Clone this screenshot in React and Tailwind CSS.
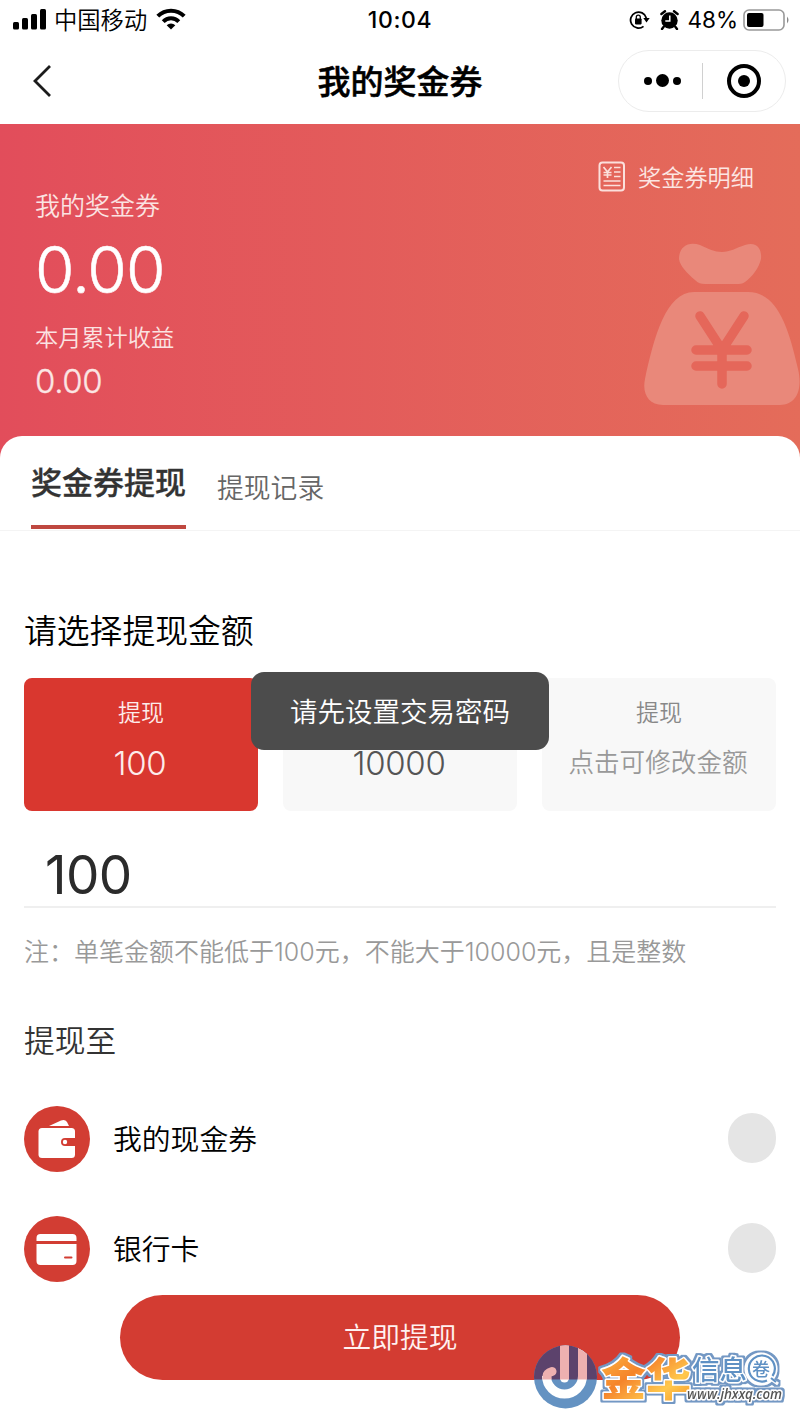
import React from 'react';

const amounts = [
    { value: '100', label: '提现', active: true },
    { value: '10000' },
    { value: '点击可修改金额', label: '提现', custom: true },
];

const StatusBar = () => (
    <div className="flex h-10 items-center justify-between pl-[13px] pr-[10px] text-black">
        <div className="flex flex-1 items-center">
            <svg width="34" height="21" viewBox="0 0 34 21">
                <rect x="0" y="13" width="6" height="7.500" rx="1.500" />
                <rect x="9" y="9" width="6" height="11.500" rx="1.500" />
                <rect x="18" y="5" width="6" height="15.500" rx="1.500" />
                <rect x="27" y="0" width="6" height="20.500" rx="1.500" />
            </svg>
            <span className="ml-[7px] pt-[2px] text-[23.3px] font-[350] leading-none">中国移动</span>
            <svg className="ml-[9px] -translate-y-px" width="30" height="22" viewBox="0 0 30 22">
                <path d="M1.800 8.200a18.500 18.500 0 0 1 26.400 0" fill="none" stroke="#000" strokeWidth="4" />
                <path d="M7.200 13.600a11 11 0 0 1 15.600 0" fill="none" stroke="#000" strokeWidth="4" />
                <path d="M15 21.500l-4.300-4.200a6.200 6.200 0 0 1 8.600 0z" />
            </svg>
        </div>
        <span className="mr-[3px] pt-px text-[23px] font-medium leading-none tracking-[0.6px]">10:04</span>
        <div className="flex flex-1 items-center justify-end">
            <svg width="21" height="20" viewBox="0 0 21 20">
                <path d="M14.500 16.400A8 8 0 1 1 17.300 8" fill="none" stroke="#000" strokeWidth="1.800" />
                <path d="M14.300 8h6.400l-3.200 4.500z" />
                <rect x="6" y="8.500" width="6.600" height="5.900" rx=".8" />
                <path d="M7.300 9.500V7.200a2 2 0 0 1 4 0v2.300" fill="none" stroke="#000" strokeWidth="1.300" />
            </svg>
            <svg className="ml-[10px]" width="19" height="20" viewBox="0 0 19 20">
                <circle cx="9.500" cy="10.500" r="8.200" />
                <path d="M1.400 4l3.600-2.800M17.600 4L14 1.200M3.500 17l-1.500 2M15.500 17l1.500 2" stroke="#000" strokeWidth="2.400" strokeLinecap="round" />
                <path d="M9.800 5.500V11H5.300" fill="none" stroke="#fff" strokeWidth="1.500" />
            </svg>
            <span className="ml-[8px] text-[22.500px] leading-none">48%</span>
            <svg className="ml-[5px]" width="47" height="22" viewBox="0 0 47 22">
                <rect x="1" y="1" width="40" height="20" rx="5" fill="none" stroke="#999" strokeWidth="1.600" />
                <rect x="4" y="4" width="16.500" height="14" rx="2" />
                <path d="M44 7.500q3 3.500 0 7z" fill="#888" />
            </svg>
        </div>
    </div>
);

const NavBar = () => (
    <header className="flex h-[84px] items-center justify-between px-[14px] pb-[3px]">
        <div className="flex-1">
            <svg className="ml-[18px]" width="20" height="34" viewBox="0 0 20 34" fill="none" stroke="#1c1c1c" strokeWidth="2.800">
                <path d="M18 2L3 17l15 15" />
            </svg>
        </div>
        <h1 className="pt-[3px] text-[33px] font-medium leading-none text-black [-webkit-text-stroke:0.5px_#000]">我的奖金券</h1>
        <div className="flex flex-1 justify-end">
            <div className="flex h-[62px] w-[168px] items-center rounded-full border border-[#ececec]">
                <div className="flex w-[83px] items-center justify-center gap-[4px] pl-1">
                    <span className="h-2 w-2 rounded-full bg-black" />
                    <span className="h-[13px] w-[13px] rounded-full bg-black" />
                    <span className="h-2 w-2 rounded-full bg-black" />
                </div>
                <span className="h-9 w-px bg-[#d0d0d0]" />
                <div className="flex flex-1 justify-center">
                    <div className="flex h-[34px] w-[34px] items-center justify-center rounded-full border-4 border-black">
                        <span className="h-3 w-3 rounded-full bg-black" />
                    </div>
                </div>
            </div>
        </div>
    </header>
);

const MoneyBag = () => (
    <svg width="156" height="164" viewBox="0 0 156 164">
        <path fill="#e9887a" d="M35 17C35 4 45-1 56 3C65 7 70 10 78 10S92 6 101 3C113-1 118 7 117 17C115 26 108 35 101 40C98 42 96 42 92 42H61C57 42 54 41 51 38C43 31 36 24 35 17Z" />
        <path fill="#e9887a" d="M50 50H104C132 50 144 82 154 127C159 148 152 163 136 163H19C4 163-2 151 1 137C10 95 22 50 50 50Z" />
        <path fill="none" stroke="#e5675a" strokeWidth="9.500" strokeLinecap="round" strokeLinejoin="round" d="M56 74L78 108L100 74M78 108V142M52 108H103M52 124H103" />
    </svg>
);

const Banner = () => (
    <section className="flex h-[342px] justify-between bg-linear-to-r from-[#e24d5b] to-[#e46c5a] pl-[35px] text-white">
        <div className="flex flex-col items-start pt-[64px]">
            <p className="text-[25px] leading-9 font-[350] text-[#fbe3e2]">我的奖金券</p>
            <p className="mt-[6px] text-[64px] leading-[80px] font-[350] tracking-[-1px] [-webkit-text-stroke:0.5px_#fff]">0.00</p>
            <p className="mt-[10px] text-[23.200px] leading-9 font-[350] text-[#fbe3e2]">本月累计收益</p>
            <p className="mt-[5px] text-[33px] leading-10 font-[350] tracking-[-0.400px] text-[#fbe6e4] [-webkit-text-stroke:0.3px_#fbe6e4]">0.00</p>
        </div>
        <div className="flex flex-col items-end pt-9">
            <div className="flex items-center pr-[46px]">
                <svg className="-translate-y-[2px]" width="28" height="31" viewBox="0 0 28 31" fill="none" stroke="#fbe0dc" strokeWidth="2">
                    <rect x="1.500" y="1.500" width="24.500" height="28" rx="3" />
                    <path d="M5.500 6l4 5 4-5M9.500 11v6M5.500 11.500h8M5.500 14h8M16 6.500h6.500M16 11h6.500M16 15.500h6.500M5.500 20h17M5.500 24.500h17" strokeWidth="1.700" />
                </svg>
                <span className="ml-3 text-[23.200px] leading-9 font-[350] text-[#fce6e3]">奖金券明细</span>
            </div>
            <div className="mt-[46px]">
                <MoneyBag />
            </div>
        </div>
    </section>
);

const Tabs = () => (
    <div className="flex h-[95px] items-start border-b border-[#f4f4f4] pl-[31px]">
        <button className="flex h-[93px] flex-col items-center border-b-4 border-[#bf4840] pt-[25px] text-[31px] font-medium leading-[44px] text-[#333] [-webkit-text-stroke:0.3px_#333]">
            奖金券提现
        </button>
        <button className="ml-[31px] pt-[32px] text-[26.800px] font-[350] leading-10 text-[#666]">提现记录</button>
    </div>
);

const AmountCard = ({ item }) => (
    <button
        className={`flex h-[133px] flex-1 flex-col items-center rounded-lg pt-[17px] font-[350] ${item.active
            ? 'bg-[#d9372f] text-[#fdeceb]'
            : 'bg-[#f8f8f8] text-[#555]'
        }`}
    >
        <span className={`h-9 text-[23px] leading-9 ${item.custom ? 'text-[#888]' : ''}`}>{item.label}</span>
        <span className={`mt-[12px] leading-10 ${item.custom ? '-translate-x-px text-[25.600px] text-[#999]' : '-translate-x-px text-[33px] tracking-[-0.300px]'}`}>
            {item.value}
        </span>
    </button>
);

const WalletIcon = () => (
    <svg width="66" height="66" viewBox="0 0 66 66">
        <circle cx="33" cy="33" r="33" fill="#d23d33" />
        <path d="M25 20l12-5.500q4-1.500 6 1.500l2 4z" fill="#fff" />
        <rect x="14.500" y="22" width="36.500" height="30" rx="3.500" fill="#fff" />
        <path d="M52 32H41a4 4 0 0 0 0 8h11z" fill="#d23d33" />
        <circle cx="41" cy="36" r="2.200" fill="#fff" />
    </svg>
);

const CardIcon = () => (
    <svg width="66" height="66" viewBox="0 0 66 66">
        <circle cx="33" cy="33" r="33" fill="#d23d33" />
        <path d="M12.500 25v-3q0-4 4-4h32q4 0 4 4v3zM12.500 28h40v17q0 4-4 4h-32q-4 0-4-4z" fill="#fff" />
        <path d="M41 41.500h6.500" stroke="#d23d33" strokeWidth="2" strokeLinecap="round" />
    </svg>
);

const PayRow = ({ icon, label }) => (
    <div className="flex h-[66px] items-center">
        {icon}
        <span className="ml-[23px] flex-1 pt-[3px] text-[28.800px] font-[350] leading-none text-black">{label}</span>
        <span className="h-[50px] w-12 -translate-y-px rounded-full bg-[#e5e5e5]" />
    </div>
);

// site badge in the bottom right corner
const SiteMark = () => (
    <svg className="absolute left-[530px] top-[1340px]" width="270" height="80" viewBox="0 0 270 80">
        <defs>
            <linearGradient id="gold" x1="0" y1="0" x2="1" y2="1">
                <stop offset="0" stopColor="#ffc043" />
                <stop offset="0.400" stopColor="#f5842b" />
                <stop offset="0.700" stopColor="#ffc84d" />
                <stop offset="1" stopColor="#f58a1f" />
            </linearGradient>
            <filter id="rim" x="-5%" y="-20%" width="110%" height="140%">
                <feMorphology in="SourceAlpha" operator="dilate" radius="1.500" result="fat" />
                <feFlood floodColor="#7398c4" />
                <feComposite in2="fat" operator="in" result="edge" />
                <feMerge>
                    <feMergeNode in="edge" />
                    <feMergeNode in="SourceGraphic" />
                </feMerge>
            </filter>
            <clipPath id="disc"><circle cx="35.500" cy="37" r="31.500" /></clipPath>
            <clipPath id="discTop"><rect width="80" height="39.500" /></clipPath>
        </defs>
        <g clipPath="url(#disc)">
            <rect width="80" height="80" fill="#6492c2" />
            <rect width="80" height="39.500" fill="#5c426c" />
            <g fill="none" stroke="#fff" strokeWidth="9">
                <path d="M52.500 0V36a18 18 0 0 1-36 0" />
                <path d="M34.500 0V38" strokeLinecap="round" />
            </g>
            <g clipPath="url(#discTop)" fill="none" stroke="#eeb0b0" strokeWidth="9">
                <path d="M52.500 0V40M34.500 0V40" />
                <path d="M17 42V36q0-3 5-4.500" strokeLinecap="round" />
            </g>
        </g>
        <g filter="url(#rim)" fontFamily="'Noto Sans CJK SC', sans-serif" stroke="#fff" strokeWidth="3" strokeLinejoin="round" paintOrder="stroke">
            <text x="71" y="56" fontSize="45" fontWeight="900" fill="url(#gold)">金华</text>
            <text x="162" y="40" fontSize="27.500" fontWeight="500" fill="#5f91c4">信息</text>
            <circle cx="231" cy="29" r="15" fill="#fff" />
            <path d="M238 37l10 7" />
            <text x="222" y="36" fontSize="18" fontWeight="500" fill="#5f91c4">卷</text>
            <text x="157" y="58.500" fontSize="13.500" fontWeight="600" fontStyle="italic" textLength="95" fontFamily="'Open Sans', sans-serif" fill="#555">www.jhxxq.com</text>
        </g>
        <path d="M241 38l5 4M242.500 36A13 13 0 1 0 237 40.500" fill="none" stroke="#5f91c4" strokeWidth="2.200" />
    </svg>
);

const App = () => {
    return (
        <div className="relative h-[1422px] w-[800px] overflow-hidden bg-white font-['Inter','Noto_Sans_CJK_SC',sans-serif]">
            <StatusBar />
            <NavBar />
            <Banner />
            <main className="relative -mt-[30px] rounded-t-[22px] bg-white">
                <Tabs />
                <div className="flex flex-col px-6 pt-[76px]">
                    <h2 className="text-[32.800px] font-[350] leading-[48px] text-black">请选择提现金额</h2>
                    <div className="mt-[23px] flex gap-[25px]">
                        {amounts.map((item, idx) => (
                            <AmountCard key={idx} item={item} />
                        ))}
                    </div>
                    <div className="flex h-[97px] items-center border-b-2 border-[#efefef] pl-[21px] pt-8">
                        <span className="text-[53px] leading-[64px] tracking-[-0.600px] text-[#2b2b2b]">100</span>
                    </div>
                    <p className="mt-[26px] whitespace-nowrap text-[25px] font-[350] leading-9 text-[#999]">
                        注：单笔金额不能低于100元，不能大于10000元，且是整数
                    </p>
                    <h3 className="mt-[49px] text-[30.700px] font-[350] leading-[44px] text-[#333]">提现至</h3>
                    <div className="mt-[43px] flex flex-col gap-11">
                        <PayRow icon={<WalletIcon />} label="我的现金券" />
                        <PayRow icon={<CardIcon />} label="银行卡" />
                    </div>
                    <button className="mx-24 mt-[13px] h-[85px] rounded-full bg-[#d33c32] text-[28.800px] font-[350] text-[#fff1f0]">立即提现</button>
                </div>
            </main>
            <div className="absolute left-[251px] top-[672px] flex h-[78px] w-[298px] items-center justify-center rounded-[13px] bg-[#4c4c4c]">
                <span className="pt-[3px] text-[27.500px] font-[350] leading-none text-white">请先设置交易密码</span>
            </div>
            <SiteMark />
        </div>
    );
};

export default App;
